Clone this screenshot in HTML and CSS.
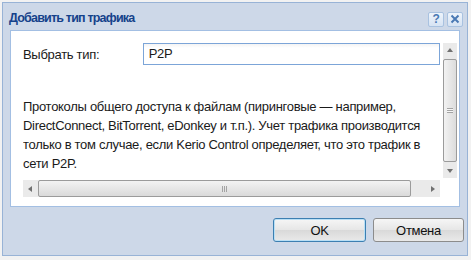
FILE: index.html
```html
<!DOCTYPE html>
<html lang="ru">
<head>
    <meta charset="UTF-8">
    <title>Добавить тип трафика</title>
    <link rel="stylesheet" href="styles.css">
</head>
<body>
    <div class="janela">
        <div class="cabecalho">
            <div class="titulo">Добавить тип трафика</div>
            <div class="ferramentas">
                <span class="ferr-btn">?</span>
                <span class="ferr-btn ferr-fechar">
                    <svg width="10" height="10" viewBox="0 0 10 10"><path d="M1.5 1.5 L8.5 8.5 M8.5 1.5 L1.5 8.5" stroke="#4a79b4" stroke-width="2"/></svg>
                </span>
            </div>
        </div>

        <div class="painel">
            <div class="rolagem">
                <div class="conteudo">
                    <div class="linha">
                        <div class="rotulo">Выбрать тип:</div>
                        <div class="campo">P2P</div>
                    </div>
                    <p class="descricao">Протоколы общего доступа к файлам (пиринговые — например, DirectConnect, BitTorrent, eDonkey и т.п.). Учет трафика производится только в том случае, если Kerio Control определяет, что это трафик в сети P2P.</p>
                </div>

                <!-- barra vertical -->
                <div class="barra-v">
                    <div class="seta"><span class="tri tri-cima"></span></div>
                    <div class="polegar-v"><span class="grip-v"></span></div>
                    <div class="seta"><span class="tri tri-baixo"></span></div>
                </div>

                <!-- barra horizontal -->
                <div class="barra-h">
                    <div class="seta"><span class="tri tri-esq"></span></div>
                    <div class="polegar-h"><span class="grip-h"></span></div>
                    <div class="seta"><span class="tri tri-dir"></span></div>
                </div>
                <div class="canto"></div>
            </div>
        </div>

        <div class="rodape">
            <button class="botao botao-foco">OK</button>
            <button class="botao">Отмена</button>
        </div>
    </div>
</body>
</html>
```

FILE: styles.css
```css
body {
    margin: 0;
    background: #f2f2f2;
    font-family: "Liberation Sans", Arial, sans-serif;
    font-size: 13px;
    letter-spacing: -0.3px;
}

.janela {
    margin: 2px 0 0 2px;
    width: 464px;
    height: 252px;
    background: #cdd8e8;
    border: 1px solid #98b3d6;
    display: flex;
    flex-direction: column;
}

.cabecalho {
    height: 27px;
    display: flex;
    align-items: center;
    justify-content: space-between;
    padding: 0 4px 0 6px;
}

.titulo {
    font-weight: bold;
    font-size: 12.5px;
    letter-spacing: -0.8px;
    color: #15428b;
    margin-top: 2px;
}

.ferramentas {
    display: flex;
    gap: 3px;
    margin-top: 5px;
}

.ferr-btn {
    width: 14px;
    height: 13px;
    border: 1px solid #a9c2e0;
    border-radius: 2px;
    background: linear-gradient(#eef4fb, #d6e3f3);
    color: #4a79b4;
    font-weight: bold;
    font-size: 12px;
    line-height: 13px;
    text-align: center;
    display: flex;
    align-items: center;
    justify-content: center;
}

.painel {
    margin: 0 7px;
    height: 177px;
    background: #fff;
    border: 1px solid #a3bfe3;
    padding: 12px 4px 0 12px;
    box-sizing: border-box;
}

.rolagem {
    display: grid;
    grid-template-columns: 417px 14px;
    grid-template-rows: 135px 17px;
    column-gap: 3px;
    row-gap: 2px;
}

.conteudo {
    overflow: hidden;
}

.linha {
    display: flex;
    align-items: center;
}

.rotulo {
    width: 120px;
    color: #1a1a1a;
}

.campo {
    width: 286px;
    height: 20px;
    border: 1px solid #7ca5d8;
    padding: 0 5px;
    line-height: 20px;
    color: #1a1a1a;
    background: linear-gradient(#f4f4f4, #fff 4px);
}

.descricao {
    margin: 32px 0 0 0;
    line-height: 19px;
    color: #1a1a1a;
    width: 415px;
}

.barra-v {
    display: flex;
    flex-direction: column;
    background: #eaeaea;
    gap: 2px;
}

.barra-h {
    display: flex;
    background: #eaeaea;
    gap: 1px;
}

.seta {
    width: 14px;
    height: 14px;
    display: flex;
    align-items: center;
    justify-content: center;
    flex-shrink: 0;
}

.barra-h .seta {
    height: 17px;
}

.polegar-v {
    flex: 1;
    border: 1px solid #9b9b9b;
    border-radius: 2px;
    background: linear-gradient(90deg, #f2f2f2, #dcdcdc);
    display: flex;
    align-items: center;
    justify-content: center;
}

.polegar-h {
    flex: 1;
    margin-right: 14px;
    border: 1px solid #9b9b9b;
    border-radius: 2px;
    background: linear-gradient(#f3f3f3, #dadada);
    display: flex;
    align-items: center;
    justify-content: center;
}

.grip-v {
    width: 6px;
    height: 5px;
    border-top: 1px solid #888;
    border-bottom: 1px solid #888;
    box-sizing: border-box;
    background: linear-gradient(#fff 40%, #888 40%, #888 60%, #fff 60%);
    opacity: 0.7;
}

.grip-h {
    width: 5px;
    height: 6px;
    border-left: 1px solid #888;
    border-right: 1px solid #888;
    box-sizing: border-box;
    background: linear-gradient(90deg, transparent 40%, #888 40%, #888 60%, transparent 60%);
    opacity: 0.7;
}

.tri {
    width: 0;
    height: 0;
    border: 3px solid transparent;
}

.tri-cima {
    border-bottom: 4px solid #707070;
    border-top-width: 0;
}

.tri-baixo {
    border-top: 4px solid #707070;
    border-bottom-width: 0;
}

.tri-esq {
    border-right: 4px solid #707070;
    border-left-width: 0;
}

.tri-dir {
    border-left: 4px solid #707070;
    border-right-width: 0;
}

.rodape {
    flex: 1;
    display: flex;
    justify-content: flex-end;
    align-items: flex-start;
    gap: 7px;
    padding: 11px 3px 0 0;
}

.botao {
    width: 91px;
    height: 24px;
    border: 1px solid #8c8c8c;
    border-radius: 3px;
    background: linear-gradient(#f6f6f6, #e6e6e6 50%, #d9d9d9 51%, #e9e9e9);
    font-family: "Liberation Sans", Arial, sans-serif;
    font-size: 13px;
    letter-spacing: -0.3px;
    color: #111;
    padding: 0;
}

.botao-foco {
    width: 93px;
    border-color: #3c7fb1;
    box-shadow: inset 0 0 0 1px #b9dff5;
}
```
